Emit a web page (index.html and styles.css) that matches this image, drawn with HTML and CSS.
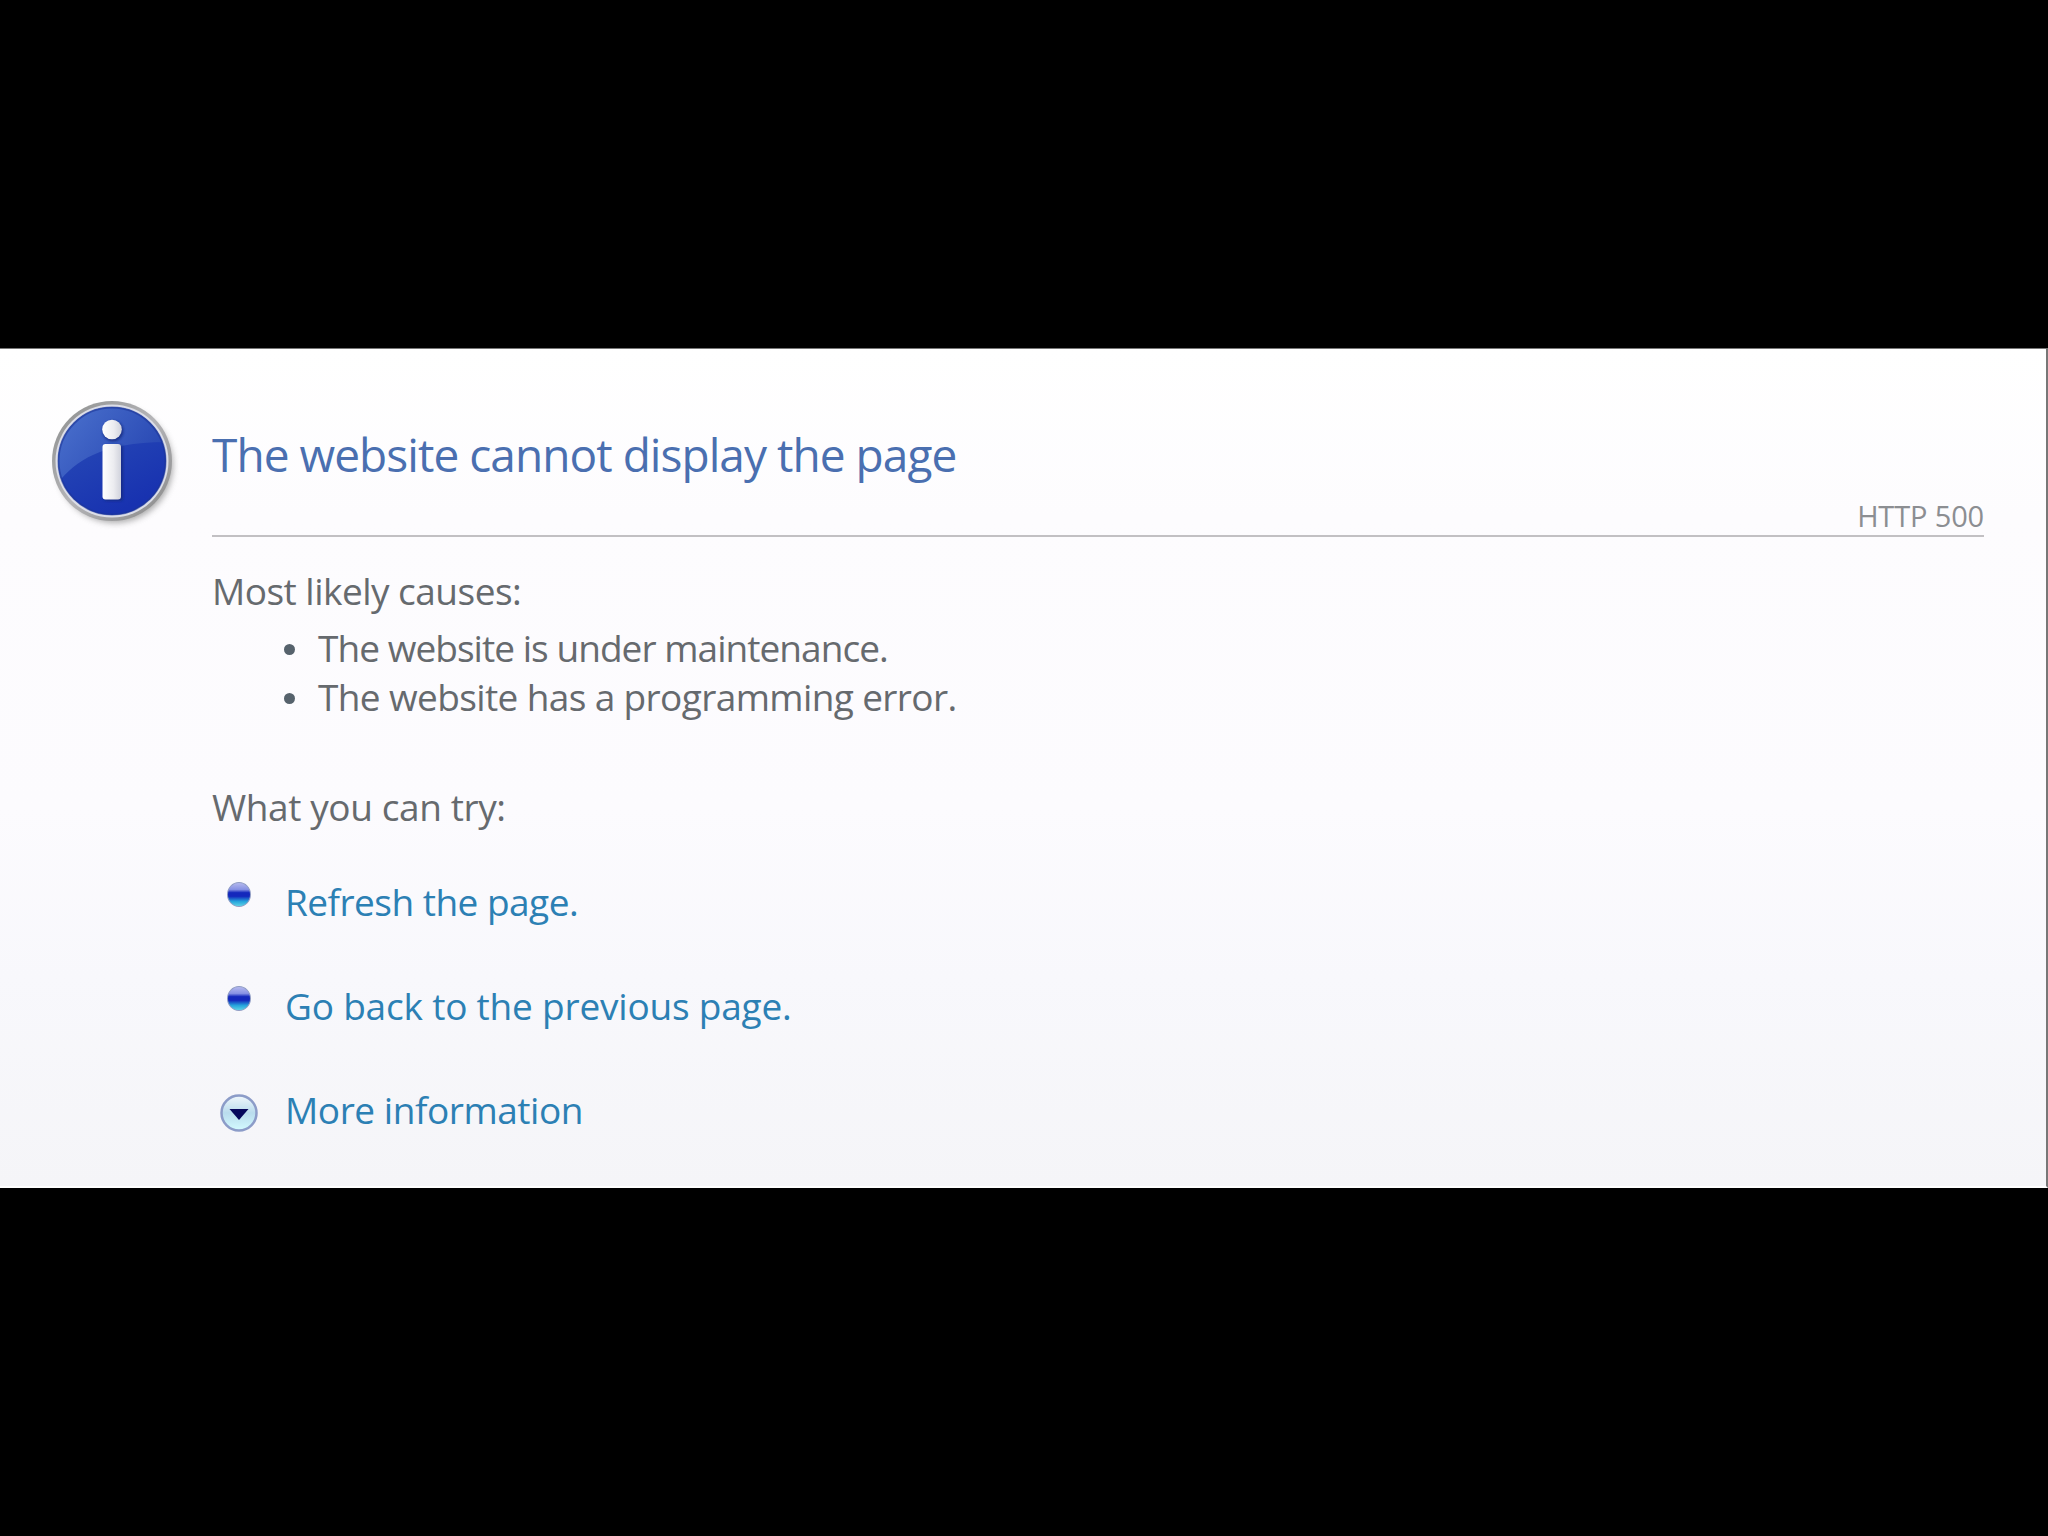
FILE: index.html
```html
<!DOCTYPE html>
<html lang="en">

<head>
  <meta charset="utf-8">
  <title>The website cannot display the page</title>
  <link rel="stylesheet" href="styles.css">
</head>

<body>

  <div class="panel">
    <!-- Info icon -->
    <svg class="info-icon" viewBox="0 0 130 130">
      <defs>
        <linearGradient id="rim" x1="0" y1="0" x2="1" y2="1">
          <stop offset="0" stop-color="#8b8d8c"/>
          <stop offset="0.5" stop-color="#b5b5b8"/>
          <stop offset="1" stop-color="#868686"/>
        </linearGradient>
        <linearGradient id="disc" x1="0" y1="0" x2="0.5" y2="1">
          <stop offset="0" stop-color="#2c51b8"/>
          <stop offset="1" stop-color="#1832b0"/>
        </linearGradient>
        <linearGradient id="gloss" x1="0" y1="0" x2="1" y2="0.5">
          <stop offset="0" stop-color="#5a82d8"/>
          <stop offset="1" stop-color="#2c4cb4"/>
        </linearGradient>
        <linearGradient id="stem" x1="0" y1="0" x2="1" y2="0">
          <stop offset="0" stop-color="#fff"/>
          <stop offset="0.6" stop-color="#ececf0"/>
          <stop offset="1" stop-color="#d0d2dc"/>
        </linearGradient>
        <filter id="soft" x="-20%" y="-20%" width="140%" height="140%">
          <feGaussianBlur stdDeviation="3"/>
        </filter>
        <filter id="edge"><feGaussianBlur stdDeviation="1.3"/></filter>
        <clipPath id="face"><circle cx="62" cy="60" r="54"/></clipPath>
      </defs>
      <circle cx="65" cy="64" r="58" fill="#777" opacity="0.6" filter="url(#soft)"/>
      <circle cx="62" cy="60" r="60" fill="url(#rim)"/>
      <circle cx="62" cy="60" r="56.500" fill="#dcdee8"/>
      <circle cx="62" cy="60" r="54" fill="url(#disc)"/>
      <path d="M6 84C24 62 48 41 116 41V0H0Z" fill="url(#gloss)" opacity="0.75" clip-path="url(#face)"/>
      <circle cx="62" cy="60" r="53.500" fill="none" stroke="#1c3698" stroke-width="2" opacity="0.6"/>
      <g fill="#142a80" opacity="0.8" filter="url(#edge)">
        <circle cx="63" cy="30" r="10.500"/>
        <rect x="54" y="44" width="19" height="56" rx="3"/>
      </g>
      <circle cx="62" cy="28.500" r="9.800" fill="url(#stem)"/>
      <rect x="52.500" y="43" width="18.500" height="55.500" rx="3" fill="url(#stem)"/>
    </svg>

    <div class="content">
      <div class="header">
        <h1>The website cannot display the page</h1>
        <div class="code">HTTP 500</div>
      </div>

      <h2 class="causes-title">Most likely causes:</h2>
      <ul class="causes">
        <li class="maintenance">The website is under maintenance.</li>
        <li class="programming">The website has a programming error.</li>
      </ul>

      <h2 class="try-title">What you can try:</h2>
      <div class="actions">
        <div class="action">
          <i class="bullet"></i>
          <a class="refresh" href="#">Refresh the page.</a>
        </div>
        <div class="action">
          <i class="bullet"></i>
          <a class="back" href="#">Go back to the previous page.</a>
        </div>
        <div class="action">
          <svg class="expand" viewBox="0 0 40 40">
            <defs>
              <linearGradient id="ball" x1="0" y1="0" x2="0" y2="1">
                <stop offset="0" stop-color="#f0f7fc"/>
                <stop offset="0.5" stop-color="#b9dced"/>
                <stop offset="1" stop-color="#d4fbff"/>
              </linearGradient>
            </defs>
            <circle cx="20" cy="20" r="17.500" fill="url(#ball)" stroke="#8c9cc8" stroke-width="2.500"/>
            <path d="M10.500 16H29.500L20 27Z" fill="#06085c"/>
          </svg>
          <a class="more" href="#">More information</a>
        </div>
      </div>
    </div>
  </div>

</body>

</html>
```

FILE: styles.css
```css
* {
  box-sizing: border-box;
}

body {
  margin: 0;
  height: 1536px;
  padding-top: 348px;
  background-color: #000;
  font-family: 'Open Sans', 'Noto Sans', sans-serif;
  font-size: 37px;
  line-height: 50px;
  color: #666a6e;
  overflow: hidden;
}

.panel {
  display: flex;
  height: 840px;
  padding: 52px 62px 0 50px;
  border-top: 1px solid #777;
  border-right: 2px solid #777;
  border-bottom: 2px solid #fff;
  background: linear-gradient(#fff 0%, #fdfcfe 20%, #fcfbfe 55%, #f8f8fc 75%, #f5f5f8 100%);
}

.info-icon {
  flex: none;
  width: 130px;
  height: 130px;
  margin-right: 32px;
}

.content {
  flex: 1;
}

.header {
  height: 136px;
  padding-top: 23px;
  border-bottom: 2px solid #c2c0c3;
}

h1 {
  margin: 0;
  font-size: 46px;
  font-weight: normal;
  line-height: 60px;
  letter-spacing: -0.95px;
  color: #4a6fb0;
}

.code {
  margin-top: 17px;
  font-size: 29px;
  line-height: 30px;
  letter-spacing: -0.15px;
  text-align: right;
  color: #8c8e92;
}

h2 {
  margin: 0;
  font-size: 37px;
  font-weight: normal;
}

.causes-title {
  margin-top: 29px;
  letter-spacing: -0.52px;
}

.causes {
  margin: 7px 0 0;
  padding: 0;
  list-style: none;
}

.causes li {
  display: flex;
  align-items: center;
  height: 49px;
  padding-left: 72px;
}

.causes li::before {
  content: '';
  width: 11px;
  height: 11px;
  margin: 3px 23px 0 0;
  border-radius: 50%;
  background-color: #56626c;
}

.maintenance {
  letter-spacing: -0.95px;
}

.programming {
  letter-spacing: -0.62px;
}

.try-title {
  margin-top: 61px;
  letter-spacing: -0.4px;
}

.actions {
  display: flex;
  flex-direction: column;
  gap: 54px;
  margin-top: 45px;
}

.action {
  display: flex;
  height: 50px;
}

.bullet {
  width: 24px;
  height: 25px;
  margin: 5px 34px 0 15px;
  border: 1px solid #8f9cc4;
  border-radius: 50%;
  background: linear-gradient(#b4b8ee 0%, #8792e4 28%, #1428bc 42%, #1428bc 58%, #26a4dc 80%, #5cd0e4 100%);
}

.expand {
  width: 40px;
  height: 40px;
  margin: 8px 26px 0 7px;
}

a {
  color: #2c80b4;
  text-decoration: none;
}

.refresh {
  letter-spacing: -0.52px;
}

.back {
  letter-spacing: -0.2px;
}

.more {
  letter-spacing: -0.45px;
}
```
